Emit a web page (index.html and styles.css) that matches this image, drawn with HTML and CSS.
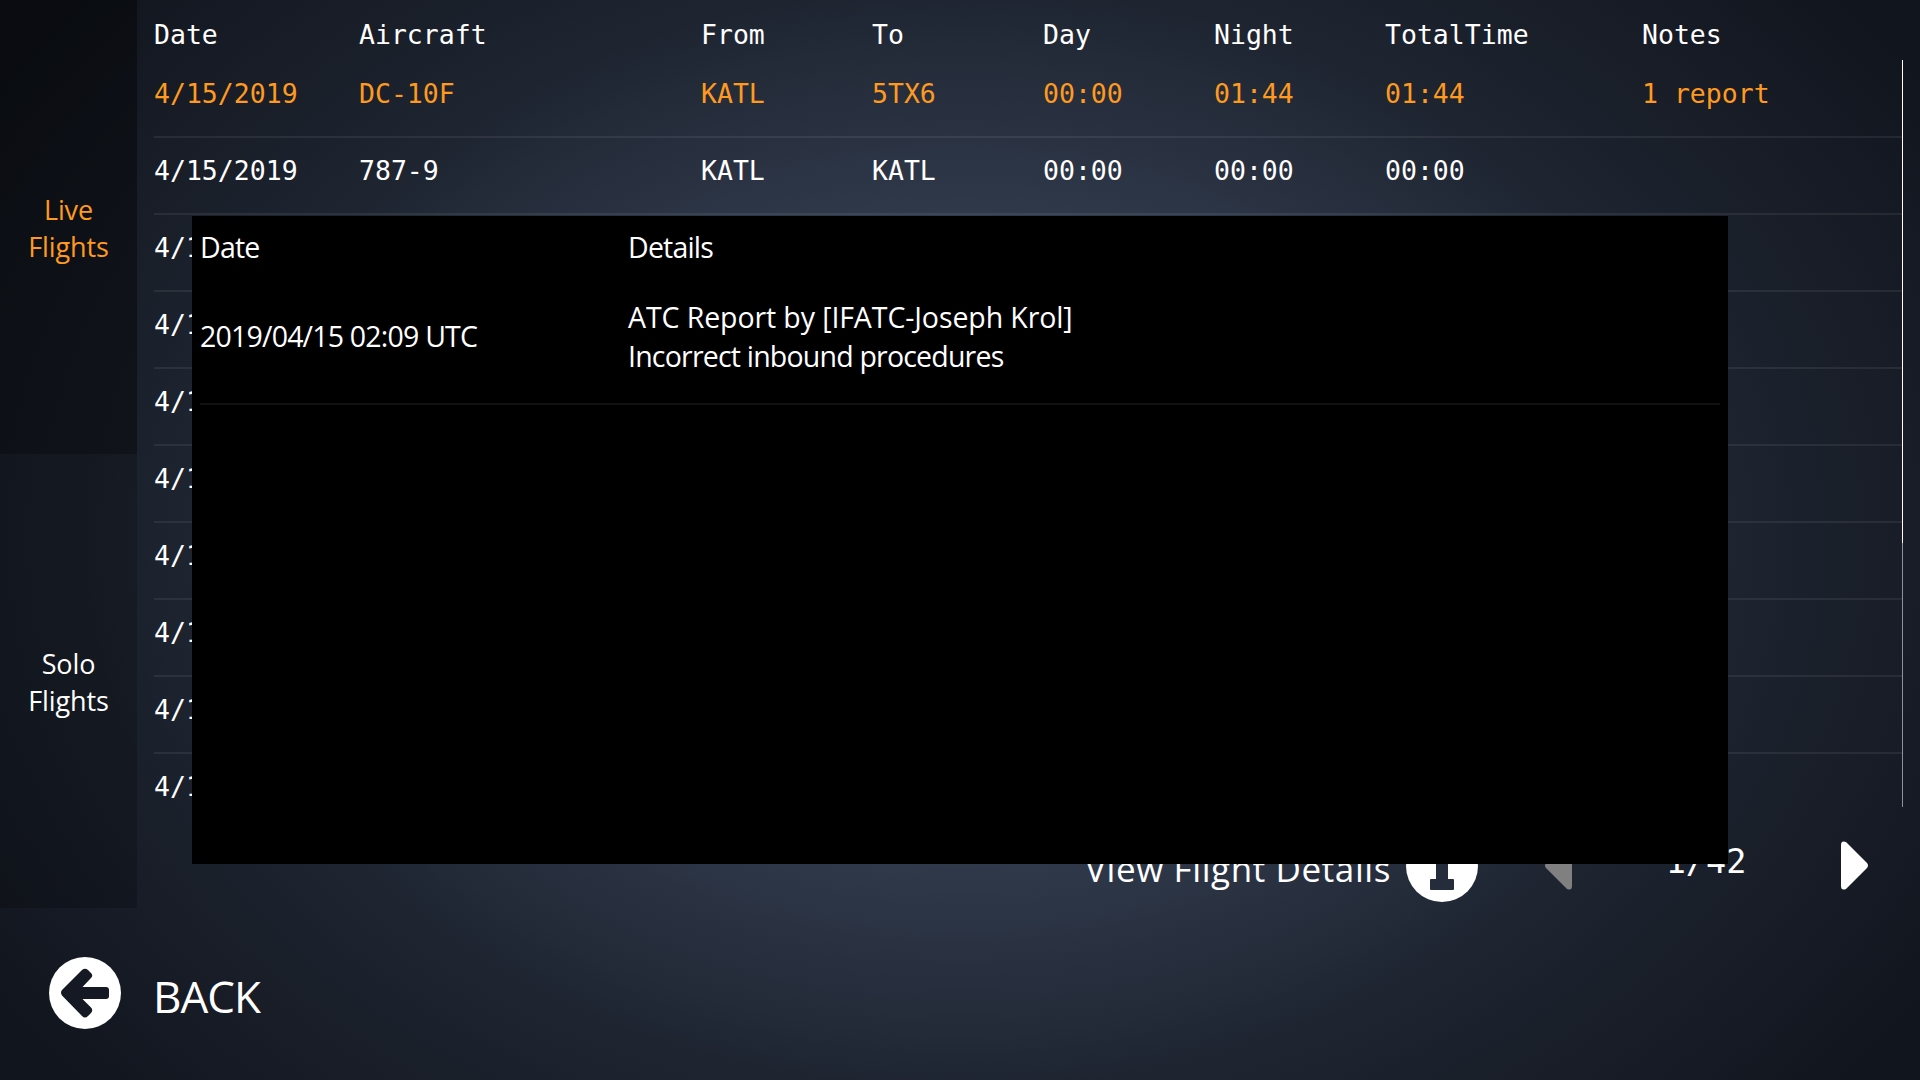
FILE: index.html
```html
<!DOCTYPE html>
<html lang="en">
<head>
  <meta charset="UTF-8">
  <meta name="viewport" content="width=device-width, initial-scale=1.0">
  <title>Logbook</title>
  <link rel="stylesheet" href="styles.css">
</head>
<body>
  <div class="main">
    <nav class="tabs">
      <div class="tab active"><span>Live</span><span>Flights</span></div>
      <div class="tab"><span>Solo</span><span>Flights</span></div>
    </nav>

    <div class="logbook">
      <div class="row header">
        <span>Date</span><span>Aircraft</span><span>From</span><span>To</span><span>Day</span><span>Night</span><span>TotalTime</span><span>Notes</span>
      </div>
      <div class="list">
        <div class="rows">
          <div class="row selected">
            <span>4/15/2019</span><span>DC-10F</span><span>KATL</span><span>5TX6</span><span>00:00</span><span>01:44</span><span>01:44</span><span>1 report</span>
          </div>
          <div class="row">
            <span>4/15/2019</span><span>787-9</span><span>KATL</span><span>KATL</span><span>00:00</span><span>00:00</span><span>00:00</span><span></span>
          </div>
          <div class="row"><span>4/1</span></div>
          <div class="row"><span>4/1</span></div>
          <div class="row"><span>4/1</span></div>
          <div class="row"><span>4/1</span></div>
          <div class="row"><span>4/1</span></div>
          <div class="row"><span>4/1</span></div>
          <div class="row"><span>4/1</span></div>
          <div class="row"><span>4/1</span></div>
        </div>
        <div class="scrollbar"><div class="thumb"></div></div>
      </div>
      <div class="pager">
        <span class="details-label">View Flight Details</span>
        <svg class="info-icon" viewBox="0 0 72 72">
          <circle cx="36" cy="36" r="36" fill="#fff"/>
          <path d="M29 10h14v11H29zM25 25h17v24h5q1 0 1 1v9q0 1-1 1H25q-1 0-1-1v-9q0-1 1-1h5V33h-5z" fill="#252d3c"/>
        </svg>
        <svg class="arrow prev" viewBox="0 0 28 50">
          <path d="M2 22Q0 24.500 2 27L23 48Q28 50 28 45V4Q28-1 23 1Z" fill="#808080"/>
        </svg>
        <span class="page">1/42</span>
        <svg class="arrow" viewBox="0 0 28 50">
          <path d="M27 22Q29 24.500 27 27L6 48Q1 50 1 45V4Q1-1 6 1Z" fill="#fff"/>
        </svg>
      </div>
    </div>
  </div>

  <div class="back">
    <svg class="back-icon" viewBox="0 0 72 72">
      <circle cx="36" cy="36" r="36" fill="#fff"/>
      <path d="M12 35.500Q12 34 13 33L33 13Q36 10.500 39 13L42 16Q44.500 18.500 42 21L33.500 30H57Q60 30 60 33V39Q60 42 57 42H33.500L42 50.500Q44.500 53 42 56L39 59Q36 62 33 59L13 38.500Q12 37 12 35.500Z" fill="#141923"/>
    </svg>
    <span>BACK</span>
  </div>

  <div class="modal">
    <div class="modal-row modal-header"><span>Date</span><span>Details</span></div>
    <div class="modal-row report">
      <span class="report-date">2019/04/15 02:09 UTC</span>
      <div class="report-text">
        <div class="reporter">ATC Report by [IFATC-Joseph Krol]</div>
        <div class="reason">Incorrect inbound procedures</div>
      </div>
    </div>
  </div>
</body>
</html>
```
FILE: styles.css
```css
* {
  box-sizing: border-box;
}

body {
  margin: 0;
  width: 1920px;
  height: 1080px;
  overflow: hidden;
  position: relative;
  color: #fff;
  font-family: 'Open Sans', 'Noto Sans', sans-serif;
  background: radial-gradient(ellipse 1150px 850px at 960px 540px, #3a475b 0%, #313c4e 34%, #2a3242 48%, #1e2531 65%, #181d27 82%, #11151e 100%);
}

.main {
  display: flex;
  height: 908px;
}

.tabs {
  width: 137px;
  display: flex;
  flex-direction: column;
}

.tab {
  flex: 1;
  display: flex;
  flex-direction: column;
  align-items: center;
  justify-content: center;
  padding-top: 2px;
  font-size: 27px;
  line-height: 37px;
  letter-spacing: -0.1px;
  background: rgba(0, 0, 0, 0.2);
}

.tab.active {
  color: #ff9a1f;
  background: rgba(0, 0, 0, 0.4);
}

.logbook {
  flex: 1;
  padding-left: 17px;
}

.row {
  display: grid;
  grid-template-columns: 205px 342px 171px 171px 171px 171px 257px 1fr;
  height: 77px;
  line-height: 68px;
  padding-bottom: 6px;
  border-bottom: 2px solid rgba(255, 255, 255, 0.07);
  font-family: 'DejaVu Sans Mono', monospace;
  font-size: 26.500px;
  white-space: nowrap;
}

.row.header {
  height: 60px;
  border: none;
  line-height: 70px;
}

.row.selected {
  color: #ff9a1f;
}

.row:last-child {
  border: none;
}

.list {
  display: flex;
  height: 747px;
  overflow: hidden;
}

.rows {
  width: 1748px;
  padding-top: 1px;
}

.list .row {
  line-height: 66px;
}

.scrollbar {
  width: 1px;
  background: #8f9196;
}

.thumb {
  height: 483px;
  background: #fff;
}

.pager {
  display: flex;
  align-items: center;
  height: 118px;
  padding-left: 931px;
}

.details-label {
  width: 321px;
  white-space: nowrap;
  padding-top: 4px;
  font-size: 35px;
  letter-spacing: 0.6px;
}

.info-icon {
  width: 72px;
  height: 72px;
}

.arrow {
  width: 28px;
  height: 50px;
}

.prev {
  margin-left: 66px;
}

.page {
  width: 268px;
  text-align: center;
  padding-bottom: 9px;
  font-family: 'DejaVu Sans Mono', monospace;
  font-size: 33.500px;
}

.back {
  display: flex;
  align-items: center;
  height: 172px;
  padding: 0 0 3px 49px;
  font-size: 44px;
  letter-spacing: -1px;
}

.back span {
  margin: 6px 0 0 32px;
}

.back-icon {
  width: 72px;
  height: 72px;
}

/* report list shown over the logbook */
.modal {
  position: absolute;
  left: 192px;
  top: 216px;
  width: 1536px;
  height: 648px;
  padding: 0 8px;
  background: #000;
  font-size: 28.500px;
  letter-spacing: -0.8px;
}

.modal-row {
  display: grid;
  grid-template-columns: 428px 1fr;
  align-items: center;
  white-space: nowrap;
}

.modal-header {
  height: 61px;
}

.report {
  height: 128px;
  line-height: 39px;
  padding-bottom: 7px;
  border-bottom: 2px solid #111;
}

.reporter {
  letter-spacing: -0.1px;
}
```
